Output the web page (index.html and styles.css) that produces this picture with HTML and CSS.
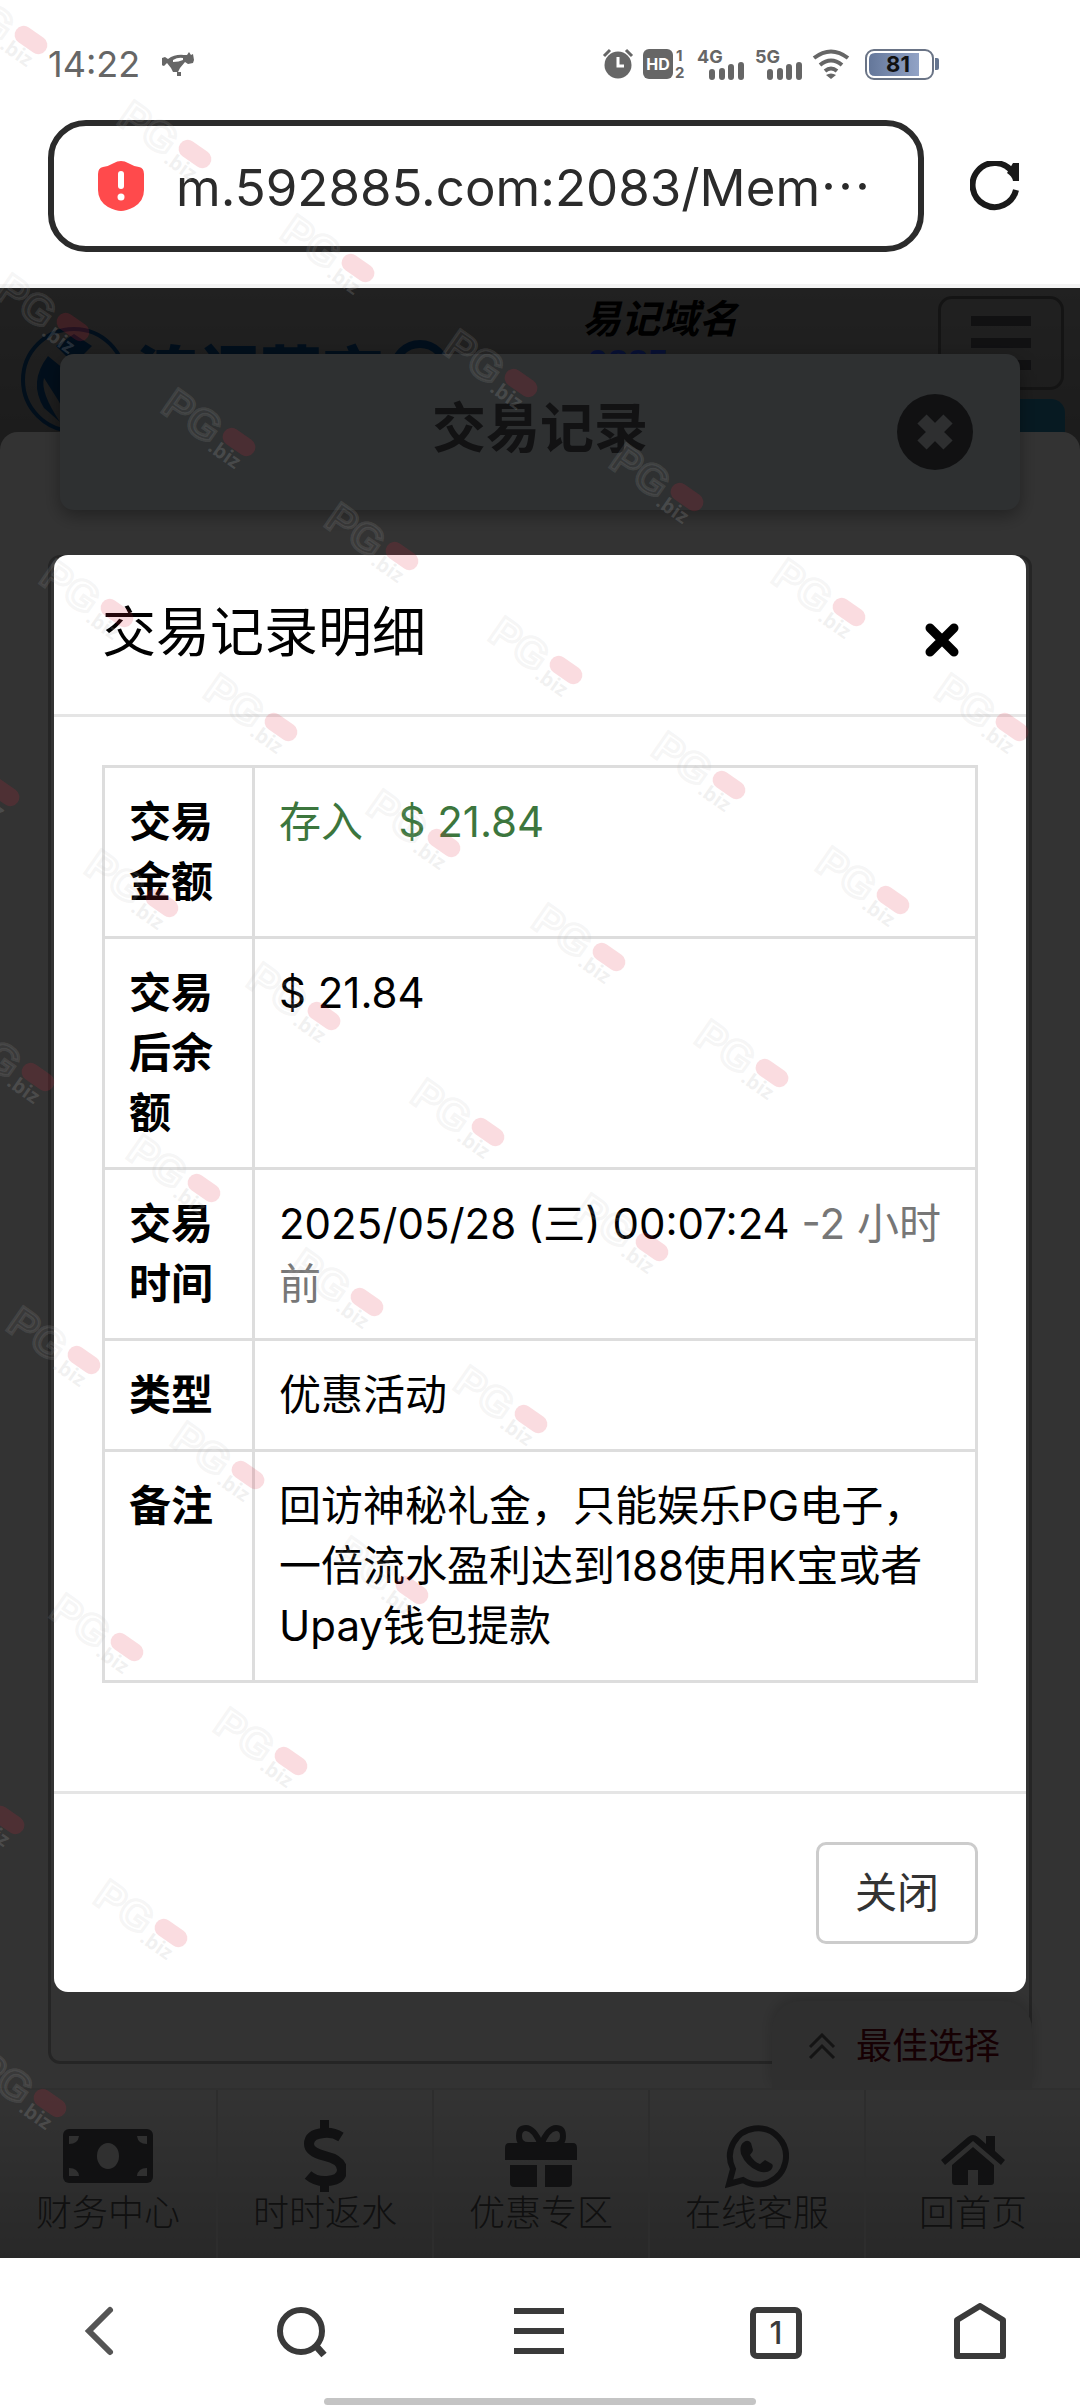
FILE: index.html
```html
<!DOCTYPE html>
<html lang="zh-CN">
<head>
<meta charset="utf-8">
<meta name="viewport" content="width=device-width, initial-scale=1">
<title>交易记录明细</title>
<link rel="stylesheet" href="styles.css">
</head>
<body>
<header class="browser-top">
  <div class="status">
    <span class="clock">14:22</span>
    <svg class="notice" width="32" height="24" viewBox="0 0 32 24" fill="#666"><path d="M0 6l3-1 3 2q7-5 16-4l3 0 2-3 2 3 2-1 1 6-1 3-5 1-3-2-5 6-2 4h-5l-2-4-4-5-3 3-3-1z"/><path d="M11 8q5-3 10-2v2q-4 2-10 2z" fill="#fff"/><path d="M15 20h4v4h-4z"/></svg>
    <div class="indicators">
      <svg width="30" height="32" viewBox="0 0 30 32"><circle cx="15" cy="17" r="13.500" fill="#666"/><path d="M1 8l6-6M29 8l-6-6" stroke="#666" stroke-width="3"/><path d="M15 9v9h6" fill="none" stroke="#fff" stroke-width="3"/></svg>
      <svg width="44" height="32" viewBox="0 0 44 32" class="mini"><rect y="1" width="30" height="30" rx="6" fill="#666"/><text x="15" y="22" text-anchor="middle" font-size="16" fill="#fff">HD</text><text x="33" y="13" font-size="15">1</text><text x="32" y="30" font-size="15">2</text></svg>
      <svg width="48" height="32" viewBox="0 0 48 32" class="mini"><text x="0" y="15" font-size="18">4G</text><path d="M15 24v5M25 23v6M34 19v10M44 17v12" stroke="#666" stroke-width="6" stroke-linecap="round"/></svg>
      <svg width="48" height="32" viewBox="0 0 48 32" class="mini"><text x="0" y="15" font-size="18">5G</text><path d="M15 24v5M25 23v6M34 19v10M44 17v12" stroke="#666" stroke-width="6" stroke-linecap="round"/></svg>
      <svg width="36" height="32" viewBox="0 0 36 32"><path d="M1 10q17-13 34 0M7 17q11-9 22 0M12 23q6-5 12 0" fill="none" stroke="#666" stroke-width="4"/><path d="M13 27q5-3 10 0l-5 4z" fill="#666"/></svg>
      <svg class="battery" width="74" height="32" viewBox="0 0 74 32"><defs><linearGradient id="charge"><stop offset="0" stop-color="#64779a"/><stop offset="1" stop-color="#92a3c6"/></linearGradient></defs><rect x="1" y="2" width="67" height="29" rx="8" fill="#fff" stroke="#6a7486" stroke-width="2"/><path d="M10 5h44v23H10q-6 0-6-6V11q0-6 6-6z" fill="url(#charge)"/><path d="M70 10h2q2 0 2 2v8q0 2-2 2h-2z" fill="#64748f"/><text x="33" y="24" text-anchor="middle" font-size="22" fill="#111">81</text></svg>
    </div>
  </div>
  <form class="address">
    <label class="url">
      <svg width="46" height="50" viewBox="0 0 46 50"><path d="M23 0q4 0 7 2 5 3 11 4 5 1 5 7v16q0 11-10 17-8 4-13 4t-13-4Q0 40 0 29V13q0-6 5-7 6-1 11-4 3-2 7-2z" fill="#ff4a4c"/><path d="M23 13v12" stroke="#fff" stroke-width="6" stroke-linecap="round"/><circle cx="23" cy="36" r="3.500" fill="#fff"/></svg>
      <input type="text" value="m.592885.com:2083/Mem⋯" aria-label="网址">
    </label>
    <button type="button" class="reload" aria-label="刷新"><svg width="50" height="50" viewBox="0 0 50 50"><path d="M43 12A22 22 0 1 0 46 29" fill="none" stroke="#1a1a1a" stroke-width="6"/><path d="M49 2v18h-6q-1-5-6-8l6-10z" fill="#1a1a1a"/></svg></button>
  </form>
</header>

<div class="viewport">
  <div class="site">
    <div class="masthead">
      <svg class="emblem" width="108" height="108" viewBox="0 0 108 108"><circle cx="54" cy="54" r="51" fill="none" stroke="#0a4a88" stroke-width="4"/><path d="M54 8l18 12-18 18-18-18zM28 30q-20 26-4 52l16 14q-20-30-16-44l14 22 12 22V48z" fill="#0a4a88"/></svg>
      <span class="brand">澳门葡京</span>
      <svg class="seal" width="60" height="60" viewBox="0 0 60 60"><circle cx="30" cy="30" r="26" fill="none" stroke="#0a4a88" stroke-width="8"/><path d="M30 14v32M16 24h28" stroke="#0a4a88" stroke-width="6"/></svg>
      <p class="domain"><span>易记域名</span><b>9885</b></p>
      <button type="button" class="menu" aria-label="菜单"><i></i><i></i><i></i></button>
      <span class="chip"></span>
    </div>
    <main class="sheet"><div class="panel"></div></main>
    <div class="page-title">
      <h1>交易记录</h1>
      <button type="button" aria-label="关闭页面"><svg width="76" height="76" viewBox="0 0 76 76"><circle cx="38" cy="38" r="38" fill="#54575c"/><path d="M25 25l26 26M51 25L25 51" stroke="#e4eaf0" stroke-width="13"/></svg></button>
    </div>
    <a href="#best" class="best"><svg width="28" height="26" viewBox="0 0 28 26" fill="none" stroke="#666" stroke-width="3"><path d="M2 14L14 2l12 12M2 25l12-12 12 12"/></svg>最佳选择</a>
    <nav class="tabs">
      <a href="#finance"><svg width="90" height="72" viewBox="0 0 90 72"><rect y="9" width="90" height="54" rx="6" fill="#54575c"/><ellipse cx="45" cy="36" rx="11" ry="13" fill="#eee"/><path d="M6 16h10q-1 8-10 8zM84 16v8q-9 0-10-8zM6 56v-8q9 0 10 8zM84 56H74q1-8 10-8z" fill="#eee"/></svg>财务中心</a>
      <a href="#rebate"><svg width="42" height="72" viewBox="0 0 42 72"><path d="M37 17Q29 12 20 13 5 14 5 24q0 8 16 12 17 4 17 14 0 10-15 11Q12 62 4 55" fill="none" stroke="#54575c" stroke-width="10"/><path d="M16 0h9v14h-9zM16 60h9v12h-9z" fill="#54575c"/></svg>时时返水</a>
      <a href="#offers"><svg width="72" height="72" viewBox="0 0 72 72"><path d="M0 28q0-5 4-5h64q4 0 4 5v12H0zM5 45h27v22H9q-4 0-4-4zM40 45h27v18q0 4-4 4H40z" fill="#54575c"/><path d="M36 25Q29 8 21 8q-7 0-7 8 0 9 9 9h26q9 0 9-9 0-8-7-8-8 0-15 17z" fill="none" stroke="#54575c" stroke-width="6"/></svg>优惠专区</a>
      <a href="#service"><svg width="64" height="72" viewBox="0 0 64 72"><path d="M4 64l4-15A28 28 0 1 1 18 60z" fill="none" stroke="#54575c" stroke-width="6"/><path d="M19 22q4-3 7 1l2 7q0 2-3 5 4 7 10 9l5-4 7 4q2 2-1 6-5 4-13 1-12-5-17-17-2-9 3-12z" fill="#54575c"/></svg>在线客服</a>
      <a href="#home"><svg width="64" height="72" viewBox="0 0 64 72" fill="#54575c"><path d="M0 40l27-23q5-4 10 0l8 7v-8h9v15l10 9-4 5-28-24L4 45z"/><path d="M32 27l21 18v17q0 3-3 3H37V50H27v15H14q-3 0-3-3V45z"/></svg>回首页</a>
    </nav>
  </div>
  <div class="backdrop"></div>
  <section class="modal" role="dialog" aria-labelledby="detail-title">
    <header>
      <h2 id="detail-title">交易记录明细</h2>
      <button type="button" class="dismiss" aria-label="关闭窗口"><svg width="36" height="36" viewBox="0 0 36 36"><path d="M6 6l24 24M30 6L6 30" stroke="#000" stroke-width="9" stroke-linecap="round"/></svg></button>
    </header>
    <div class="detail">
      <table>
        <tbody>
          <tr><th scope="row">交易金额</th><td class="credit">存入 &nbsp; $ 21.84</td></tr>
          <tr><th scope="row">交易后余额</th><td>$ 21.84</td></tr>
          <tr><th scope="row">交易时间</th><td>2025/05/28 (三) 00:07:24 <span class="ago">-2 小时前</span></td></tr>
          <tr><th scope="row">类型</th><td>优惠活动</td></tr>
          <tr><th scope="row">备注</th><td>回访神秘礼金，只能娱乐PG电子，一倍流水盈利达到188使用K宝或者Upay钱包提款</td></tr>
        </tbody>
      </table>
    </div>
    <footer><button type="button" class="close">关闭</button></footer>
  </section>
</div>

<nav class="browser-nav">
  <button type="button" aria-label="后退"><svg width="52" height="56" viewBox="0 0 52 56" fill="none" stroke="#555" stroke-width="6"><path d="M37 7L16 28l21 21" stroke-linecap="round"/></svg></button>
  <button type="button" aria-label="搜索"><svg width="52" height="56" viewBox="0 0 52 56" fill="none" stroke="#3a3a3a" stroke-width="6"><circle cx="25" cy="28" r="21"/><path d="M40 43l8 9" stroke-width="7"/></svg></button>
  <button type="button" aria-label="菜单"><svg width="52" height="56" viewBox="0 0 52 56" fill="none" stroke="#3a3a3a" stroke-width="6"><path d="M1 8h50M1 28h50M1 48h50"/></svg></button>
  <button type="button" aria-label="标签页"><span class="count">1</span></button>
  <button type="button" aria-label="主页"><svg width="52" height="56" viewBox="0 0 52 56" fill="none" stroke="#3a3a3a" stroke-width="6" stroke-linejoin="round"><path d="M3 17L26 3l23 14v36H3z"/></svg></button>
  <span class="handle"></span>
</nav>

<svg class="watermarks" aria-hidden="true">
  <defs>
    <g id="mark" transform="rotate(35)">
      <text class="mark-name" x="-83" y="20">PG</text>
      <text class="mark-tld" x="-22" y="25">.biz</text>
      <rect x="-18" y="-9" width="36" height="18" rx="9" fill="#e02840" fill-opacity=".16"/>
    </g>
  </defs>
  <use href="#mark" x="31" y="40"/><use href="#mark" x="195" y="154"/><use href="#mark" x="358" y="268"/><use href="#mark" x="521" y="383"/><use href="#mark" x="687" y="497"/><use href="#mark" x="849" y="612"/><use href="#mark" x="1012" y="727"/>
  <use href="#mark" x="73" y="327"/><use href="#mark" x="239" y="442"/><use href="#mark" x="402" y="556"/><use href="#mark" x="566" y="670"/><use href="#mark" x="729" y="785"/><use href="#mark" x="893" y="900"/>
  <use href="#mark" x="117" y="613"/><use href="#mark" x="281" y="727"/><use href="#mark" x="444" y="843"/><use href="#mark" x="609" y="957"/><use href="#mark" x="772" y="1073"/>
  <use href="#mark" x="3" y="792"/><use href="#mark" x="162" y="903"/><use href="#mark" x="324" y="1016"/><use href="#mark" x="488" y="1132"/><use href="#mark" x="652" y="1247"/>
  <use href="#mark" x="38" y="1077"/><use href="#mark" x="204" y="1188"/><use href="#mark" x="367" y="1302"/><use href="#mark" x="531" y="1419"/>
  <use href="#mark" x="84" y="1360"/><use href="#mark" x="248" y="1475"/><use href="#mark" x="412" y="1590"/>
  <use href="#mark" x="127" y="1647"/><use href="#mark" x="291" y="1761"/>
  <use href="#mark" x="8" y="1820"/><use href="#mark" x="171" y="1933"/>
  <use href="#mark" x="50" y="2103"/>
</svg>
</body>
</html>
```

FILE: styles.css
```css
* { box-sizing: border-box; }

body {
  margin: 0;
  min-height: 100vh;
  display: flex;
  flex-direction: column;
  position: relative;
  background: #fff;
  color: #000;
  font-family: Inter, "Noto Sans CJK SC", sans-serif;
  font-size: 42px;
  line-height: 60px;
}

svg { display: block; flex: none; }
button { margin: 0; padding: 0; border: 0; background: none; font: inherit; color: inherit; }
a { color: inherit; text-decoration: none; }
h1, h2, p { margin: 0; }

/* Browser chrome, top */
.browser-top { border-bottom: 4px solid #f3f3f3; padding: 32px 48px; height: 288px; }
.status { display: flex; align-items: center; height: 64px; margin-bottom: 24px; }
.clock { font: 36px/64px Inter, sans-serif; color: #666; width: 92px; }
.notice { margin-left: 22px; }
.indicators { display: flex; align-items: center; gap: 10px; margin-left: auto; margin-right: 93px; }
.indicators svg { overflow: visible; }
.indicators text { font-family: Inter, sans-serif; font-weight: 700; }
.mini text:not([fill]) { fill: #666; }
.battery { margin-left: 6px; }
.address { display: flex; align-items: center; margin: 0; }
.url {
  flex: 1;
  min-width: 0;
  height: 132px;
  display: flex;
  align-items: center;
  gap: 32px;
  padding: 0 36px 0 44px;
  border: 6px solid #2b2b2b;
  border-radius: 38px;
}
.url input {
  flex: 1;
  min-width: 0;
  border: 0;
  padding: 4px 0 0;
  outline: 0;
  background: none;
  color: #2b2b2b;
  font: 51px/60px Inter, "Noto Sans CJK SC", sans-serif;
}
.reload { margin-left: 46px; margin-right: 12px; }

/* Web page behind the dialog */
.viewport { flex: 1; position: relative; display: flex; flex-direction: column; overflow: hidden; }
.site { flex: 1; display: flex; flex-direction: column; position: relative; background: linear-gradient(#a4a4a4, #8c8c8c 144px); }
.masthead { height: 144px; position: relative; display: flex; align-items: flex-start; padding: 8px 16px 0 20px; overflow: hidden; }
.emblem { margin-top: 30px; }
.brand { margin: 48px 0 0 8px; font-size: 62px; line-height: 64px; font-weight: 900; color: #0a4a88; }
.seal { margin: 44px 0 0 6px; }
.domain { margin-left: auto; display: flex; flex-direction: column; font-size: 39px; line-height: 46px; font-weight: 700; }
.domain span { font-style: italic; }
.domain b { padding-left: 6px; font: 700 36px/44px "Liberation Sans", sans-serif; color: #2850ff; }
.menu {
  width: 126px;
  height: 94px;
  margin-left: 200px;
  border: 3px solid #666;
  border-radius: 14px;
  display: flex;
  flex-direction: column;
  align-items: center;
  justify-content: center;
  gap: 12px;
}
.menu i { width: 60px; height: 10px; background: #55555c; }
.chip { position: absolute; right: 15px; top: 111px; width: 90px; height: 48px; border-radius: 14px; background: #2382aa; }
.sheet { flex: 1; display: flex; padding: 123px 48px 24px; border-radius: 18px 18px 0 0; background: #fff; }
.panel { flex: 1; border: 3px solid #b8b8b8; border-radius: 12px; }
.page-title {
  position: absolute;
  top: 66px;
  left: 60px;
  right: 60px;
  height: 156px;
  display: flex;
  align-items: center;
  justify-content: center;
  padding-bottom: 6px;
  border-radius: 14px;
  background: #e4edf4;
  box-shadow: 0 6px 18px rgba(0, 0, 0, .35);
  color: #5a5d62;
}
.page-title h1 { font-size: 54px; line-height: 72px; font-weight: 700; }
.page-title button { position: absolute; right: 47px; top: 40px; }
.best {
  position: absolute;
  right: 48px;
  bottom: 170px;
  display: flex;
  align-items: center;
  gap: 20px;
  padding: 15px 32px 12px 36px;
  border-radius: 28px 28px 0 0;
  background: #e8e8e8;
  box-shadow: 0 -3px 15px rgba(0, 0, 0, .2);
  color: #700010;
  font-size: 36px;
}
.tabs {
  position: relative;
  display: grid;
  grid-template-columns: repeat(5, 1fr);
  border-top: 2px solid #ebebeb;
  background: linear-gradient(#fff, #c8c8c8);
}
.tabs a {
  height: 168px;
  padding-top: 30px;
  display: flex;
  flex-direction: column;
  align-items: center;
  font-size: 36px;
  line-height: 42px;
  font-weight: 300;
  color: #505050;
}
.tabs a + a { border-left: 2px solid #e2e2e2; }
.backdrop { position: absolute; inset: 0; background: rgba(0, 0, 0, .8); }

/* Detail dialog */
.modal {
  position: absolute;
  top: 267px;
  left: 5%;
  right: 5%;
  border-radius: 14px;
  background: #fff;
}
.modal header {
  display: flex;
  align-items: center;
  justify-content: space-between;
  padding: 42px 66px 45px 48px;
  border-bottom: 3px solid #e5e5e5;
}
.modal h2 { font-size: 54px; line-height: 72px; font-weight: 400; }
.dismiss { margin-top: 14px; }
.detail { padding: 48px 48px 108px; }
table { width: 100%; table-layout: fixed; border-collapse: collapse; }
th, td { padding: 24px; border: 3px solid #ddd; text-align: left; vertical-align: top; }
th { width: 150px; font-weight: 700; }
.credit { color: #3c763d; }
.ago { color: #777; }
.modal footer { display: flex; justify-content: flex-end; padding: 48px; border-top: 3px solid #e5e5e5; }
.close { padding: 18px 36px; border: 3px solid #ccc; border-radius: 10px; color: #333; }

/* Browser chrome, bottom */
.browser-nav {
  position: relative;
  height: 150px;
  display: grid;
  grid-template-columns: 198fr 208fr 266fr 208fr 200fr;
  justify-items: center;
  align-items: start;
  padding-top: 45px;
}
.count {
  display: block;
  width: 52px;
  height: 52px;
  margin-top: 4px;
  border: 6px solid #3a3a3a;
  border-radius: 7px;
  color: #3a3a3a;
  font: 500 31px/40px Inter, sans-serif;
  text-align: center;
}
.handle { position: absolute; bottom: 3px; left: 30%; right: 30%; height: 7px; border-radius: 4px; background: #c4c4c4; }

/* Watermark layer */
.watermarks { position: absolute; inset: 0; width: 100%; height: 100%; pointer-events: none; overflow: hidden; }
.mark-name { font: 700 42px "Liberation Sans", sans-serif; fill: #fff; fill-opacity: .03; stroke: #b8b8b8; stroke-opacity: .15; stroke-width: 3px; }
.mark-tld { font: 700 20px "Open Sans", sans-serif; fill: #b8b8b8; fill-opacity: .2; }
```
